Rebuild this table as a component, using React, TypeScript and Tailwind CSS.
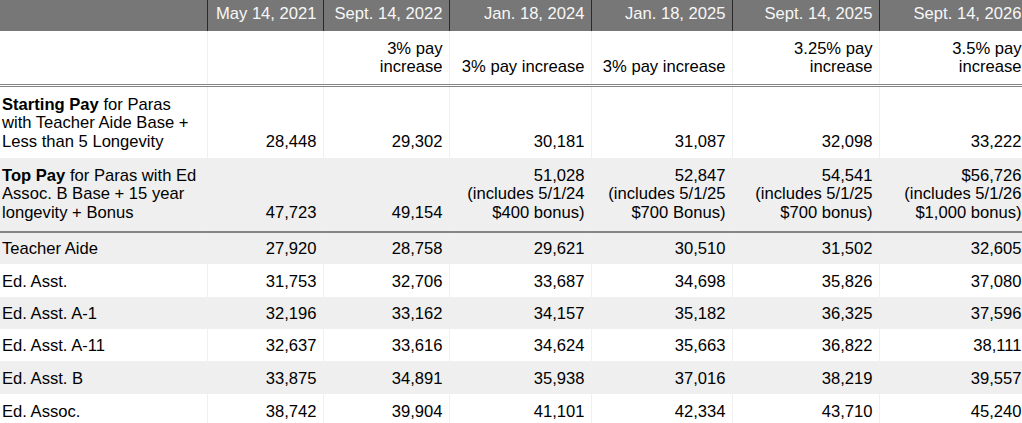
import React from "react";

const cols = [207, 116, 126, 142, 141, 147, 149];

const dates = ["May 14, 2021", "Sept. 14, 2022", "Jan. 18, 2024", "Jan. 18, 2025", "Sept. 14, 2025", "Sept. 14, 2026"];

const sub: React.ReactNode[] = [
  "",
  <>3% pay<br />increase</>,
  "3% pay increase",
  "3% pay increase",
  <>3.25% pay<br />increase</>,
  <>3.5% pay<br />increase</>,
];

const simple: [string, string[], string][] = [
  ["Teacher Aide", ["27,920", "28,758", "29,621", "30,510", "31,502", "32,605"], "h-[32px]"],
  ["Ed. Asst.", ["31,753", "32,706", "33,687", "34,698", "35,826", "37,080"], "h-[33px]"],
  ["Ed. Asst. A-1", ["32,196", "33,162", "34,157", "35,182", "36,325", "37,596"], "h-[32px]"],
  ["Ed. Asst. A-11", ["32,637", "33,616", "34,624", "35,663", "36,822", "38,111"], "h-[32px]"],
  ["Ed. Asst. B", ["33,875", "34,891", "35,938", "37,016", "38,219", "39,557"], "h-[33px]"],
  ["Ed. Assoc.", ["38,742", "39,904", "41,101", "42,334", "43,710", "45,240"], "h-[33px]"],
];

const topPay: React.ReactNode[] = [
  "47,723",
  "49,154",
  <>51,028<br />(includes 5/1/24<br />$400 bonus)</>,
  <>52,847<br />(includes 5/1/25<br />$700 Bonus)</>,
  <>54,541<br />(includes 5/1/25<br />$700 bonus)</>,
  <>$56,726<br />(includes 5/1/26<br />$1,000 bonus)</>,
];

const starting = ["28,448", "29,302", "30,181", "31,087", "32,098", "33,222"];

const bodyCell = "border-x border-[#f0f0f0] align-bottom text-right pr-[6px] pl-[3px]";
const firstCell = "border-r border-[#f0f0f0] align-bottom text-left pl-[2px] pr-[3px]";

export default function App() {
  return (
    <div
      className="w-[1022px] h-[423px] overflow-hidden bg-white text-black text-[16.6px] leading-[18.5px]"
      style={{ fontFamily: '"Liberation Sans", Arial, sans-serif' }}
    >
      <table className="table-fixed border-collapse w-[1028px]">
        <colgroup>
          {cols.map((w, i) => (
            <col key={i} style={{ width: w }} />
          ))}
        </colgroup>
        <tbody>
          <tr className="h-[31px] bg-[#777777] text-[#f7f7f7]">
            <td className="border-r border-[#2a2a2a]"></td>
            {dates.map((d, i) => (
              <td key={i} className="border-r border-[#2a2a2a] text-right pr-[6px] align-middle pb-[2px]">
                {d}
              </td>
            ))}
          </tr>
          <tr className="h-[54px] border-b-[3px] border-double border-[#858585]">
            <td className={firstCell + " pb-[7px]"}></td>
            {sub.map((s, i) => (
              <td key={i} className={bodyCell + " pb-[7px]"}>
                {s}
              </td>
            ))}
          </tr>
          <tr className="h-[73px]">
            <td className={firstCell + " pb-[7px]"}>
              <b>Starting Pay</b> for Paras
              <br />
              with Teacher Aide Base +
              <br />
              Less than 5 Longevity
            </td>
            {starting.map((v, i) => (
              <td key={i} className={bodyCell + " pb-[7px]"}>
                {v}
              </td>
            ))}
          </tr>
          <tr className="h-[74px] bg-[#efefef] border-b-2 border-[#858585]">
            <td className={firstCell + " pb-[9px]"}>
              <b>Top Pay</b> for Paras with Ed
              <br />
              Assoc. B Base + 15 year
              <br />
              longevity + Bonus
            </td>
            {topPay.map((v, i) => (
              <td key={i} className={bodyCell + " pb-[9px]"}>
                {v}
              </td>
            ))}
          </tr>
          {simple.map(([label, vals, h], r) => (
            <tr key={r} className={(r % 2 === 0 ? "bg-[#efefef]" : "bg-white") + " " + h}>
              <td className={firstCell + " pb-[6px]"}>{label}</td>
              {vals.map((v, i) => (
                <td key={i} className={bodyCell + " pb-[6px]"}>
                  {v}
                </td>
              ))}
            </tr>
          ))}
        </tbody>
      </table>
    </div>
  );
}
